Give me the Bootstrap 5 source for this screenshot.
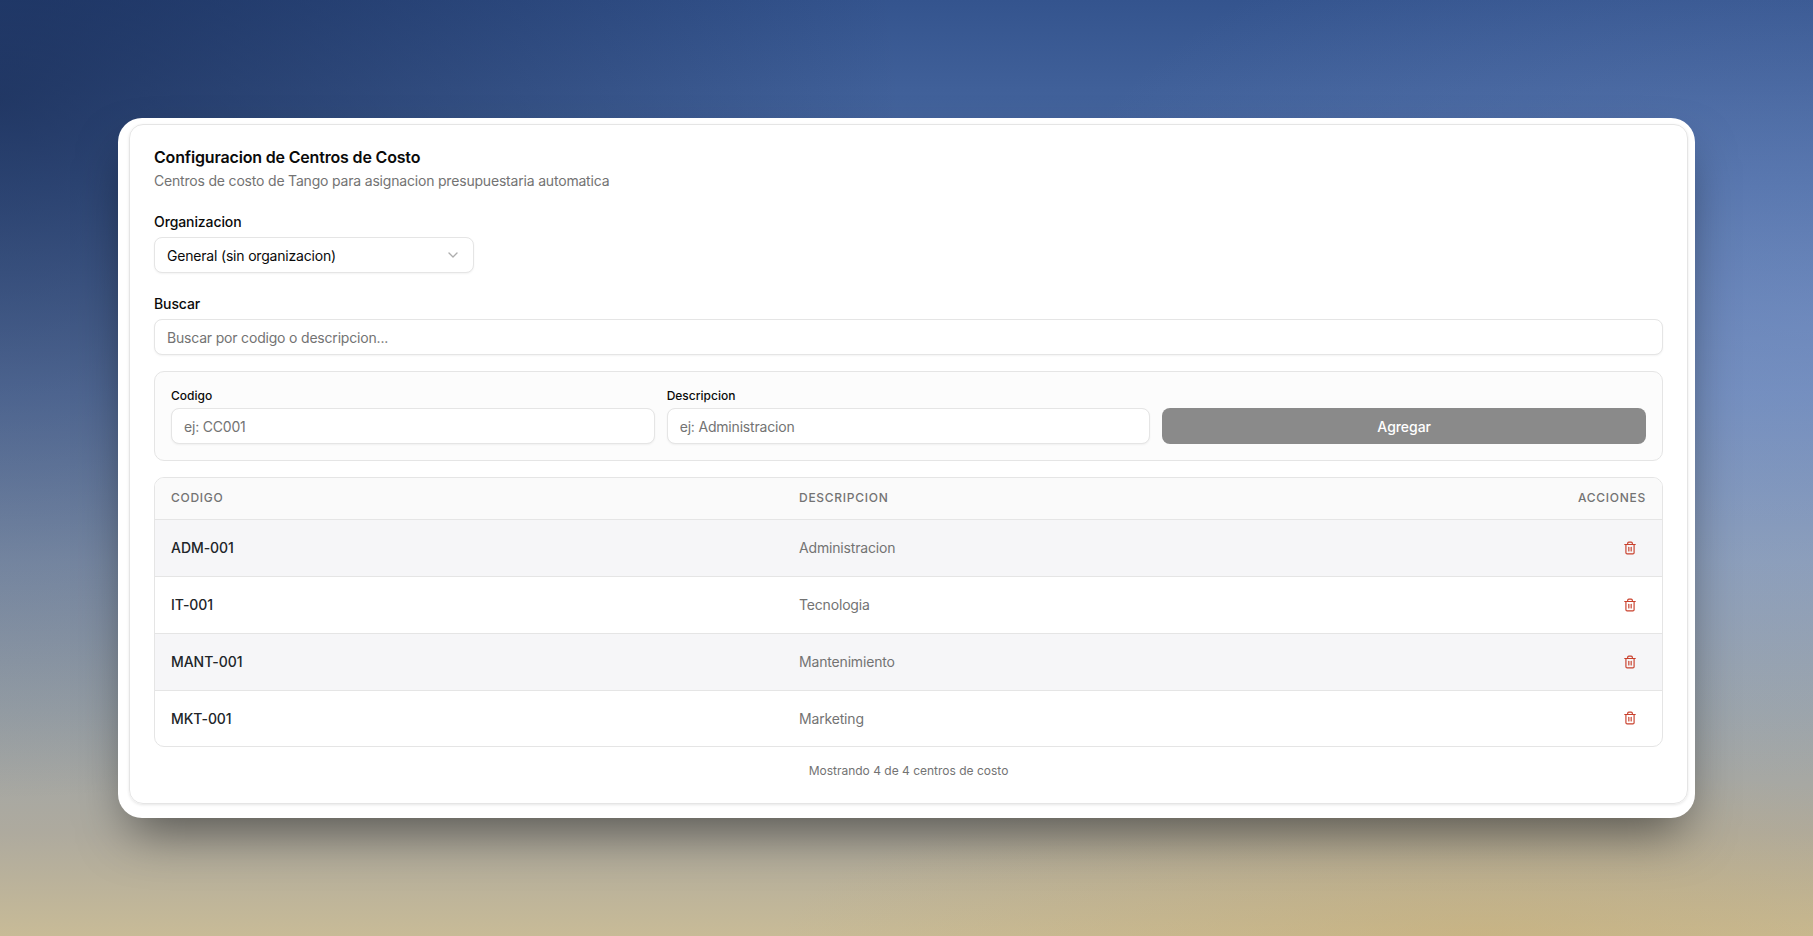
<!DOCTYPE html>
<html lang="es">
  <head>
    <meta charset="UTF-8" />
    <meta name="viewport" content="width=device-width, initial-scale=1.0" />
    <title>Centros de Costo</title>
    <link
      href="https://cdn.jsdelivr.net/npm/bootstrap@5.3.3/dist/css/bootstrap.min.css"
      rel="stylesheet"
    />
    <style>
      html, body { height: 100%; }
      body {
        font-family: Inter, "Liberation Sans", sans-serif;
        font-size: 14px;
        color: #0a0a0a;
        overflow: hidden;
        background:
          radial-gradient(700px 170px at 1480px 936px, rgba(200,170,105,.4), transparent),
          radial-gradient(900px 700px at 0 100px, rgba(12,28,65,.6), transparent),
          radial-gradient(800px 460px at 1813px 320px, rgba(130,155,210,.35), transparent),
          linear-gradient(180deg, #34548e 0%, #4d6da5 20%, #6f8ab8 42%, #8e9fb7 60%, #9da5aa 76%, #aeaa9e 89%, #c8bb97 100%);
      }
      .frame {
        width: 1577px;
        height: 700px;
        padding: 6px 7px 14px 11px;
        background: #fff;
        border-radius: 24px;
        box-shadow: 0 25px 50px -12px rgba(0,0,0,.5);
      }
      .panel-card {
        height: 100%;
        padding: 20px 24px 24px;
        border: 1px solid #e5e5e5;
        border-radius: 14px;
        box-shadow: 0 1px 3px rgba(0,0,0,.1);
      }
      .page-title { font-size: 16px; line-height: 24px; font-weight: 600; letter-spacing: -.17px; margin: 0 0 2px; }
      .page-sub { font-size: 14px; line-height: 20px; letter-spacing: -.19px; color: #737373; margin: 0 0 21px; }
      .field-label { font-size: 14px; line-height: 20px; font-weight: 500; letter-spacing: -.1px; margin-bottom: 5px; display: block; }
      .field-input {
        height: 36px;
        padding: 0 12px;
        font-size: 14px;
        letter-spacing: -.19px;
        color: #0a0a0a;
        background-color: #fff;
        border: 1px solid #e5e5e5;
        border-radius: 8px;
        box-shadow: 0 1px 2px rgba(0,0,0,.05);
      }
      .field-input::placeholder { color: #737373; opacity: 1; }
      .org-select { width: 320px; margin-bottom: 21px; }
      .add-panel {
        margin: 16px 0;
        padding: 16px;
        background: #fcfcfc;
        border: 1px solid #e5e5e5;
        border-radius: 10px;
      }
      .add-row { --bs-gutter-x: 12px; }
      .add-label { font-size: 12px; line-height: 16px; font-weight: 500; margin-bottom: 4px; display: block; }
      .add-btn {
        height: 36px;
        font-size: 14px;
        font-weight: 500;
        letter-spacing: -.05px;
        color: #fff;
        background: #8a8a8a;
        border: 0;
        border-radius: 8px;
      }
      .cost-wrap { border: 1px solid #e5e5e5; border-radius: 10px; overflow: hidden; }
      .cost-table { margin: 0; --bs-table-border-color: #e5e5e5; table-layout: fixed; }
      .cost-table th {
        height: 41px;
        padding: 0 16px;
        font-size: 12px;
        font-weight: 500;
        letter-spacing: .06em;
        text-transform: uppercase;
        color: #737373;
        background: #fafafa;
        vertical-align: middle;
      }
      .cost-table td { height: 57px; padding: 0 16px; vertical-align: middle; font-size: 14px; }
      .cost-table tr:last-child td { border-bottom: 0; height: 56px; }
      .cost-table tbody tr:nth-child(odd) td { background: #f6f6f8; }
      .col-code { width: 628px; }
      .col-act { width: 300px; }
      .cell-code { font-weight: 500; letter-spacing: -.05px; }
      .cell-desc { color: #737373; letter-spacing: -.17px; }
      .trash-btn { display: block; line-height: 0; margin: 0 9px 0 auto; color: #c9402c; padding: 0; border: 0; background: none; }
      .foot-note { margin: 16px 0 0; font-size: 12px; line-height: 16px; color: #737373; text-align: center; }
    </style>
  </head>
  <body class="d-flex align-items-center justify-content-center">
    <div class="frame">
      <div class="panel-card">
        <h1 class="page-title">Configuracion de Centros de Costo</h1>
        <p class="page-sub">Centros de costo de Tango para asignacion presupuestaria automatica</p>

        <label class="field-label">Organizacion</label>
        <div class="field-input org-select d-flex align-items-center justify-content-between">
          <span>General (sin organizacion)</span>
          <svg width="16" height="16" viewBox="0 0 24 24" fill="none" stroke="#adadad" stroke-width="2" stroke-linecap="round" stroke-linejoin="round"><path d="m6 9 6 6 6-6" /></svg>
        </div>

        <label class="field-label">Buscar</label>
        <input class="form-control field-input" placeholder="Buscar por codigo o descripcion..." />

        <div class="add-panel">
          <div class="row add-row">
            <div class="col-4">
              <label class="add-label">Codigo</label>
              <input class="form-control field-input" placeholder="ej: CC001" />
            </div>
            <div class="col-4">
              <label class="add-label">Descripcion</label>
              <input class="form-control field-input" placeholder="ej: Administracion" />
            </div>
            <div class="col-4 d-flex align-items-end">
              <button class="btn add-btn w-100">Agregar</button>
            </div>
          </div>
        </div>

        <div class="cost-wrap">
          <table class="table cost-table">
            <thead>
              <tr>
                <th class="col-code">Codigo</th>
                <th>Descripcion</th>
                <th class="col-act text-end">Acciones</th>
              </tr>
            </thead>
            <tbody id="rows"></tbody>
          </table>
        </div>

        <p class="foot-note">Mostrando 4 de 4 centros de costo</p>
      </div>
    </div>
    <script>
      const centros = [
        ["ADM-001", "Administracion"],
        ["IT-001", "Tecnologia"],
        ["MANT-001", "Mantenimiento"],
        ["MKT-001", "Marketing"],
      ];
      const trash = `<svg width="14" height="14" viewBox="0 0 24 24" fill="none" stroke="currentColor" stroke-width="2" stroke-linecap="round" stroke-linejoin="round"><path d="M3 6h18" /><path d="M19 6v14a2 2 0 0 1-2 2H7a2 2 0 0 1-2-2V6" /><path d="M8 6V4a2 2 0 0 1 2-2h4a2 2 0 0 1 2 2v2" /><line x1="10" x2="10" y1="11" y2="17" /><line x1="14" x2="14" y1="11" y2="17" /></svg>`;
      document.getElementById("rows").innerHTML = centros
        .map(function (c) {
          return `<tr><td class="cell-code">${c[0]}</td><td class="cell-desc">${c[1]}</td><td><button class="trash-btn">${trash}</button></td></tr>`;
        })
        .join("");
    </script>
    <script src="https://cdn.jsdelivr.net/npm/bootstrap@5.3.3/dist/js/bootstrap.bundle.min.js"></script>
  </body>
</html>
